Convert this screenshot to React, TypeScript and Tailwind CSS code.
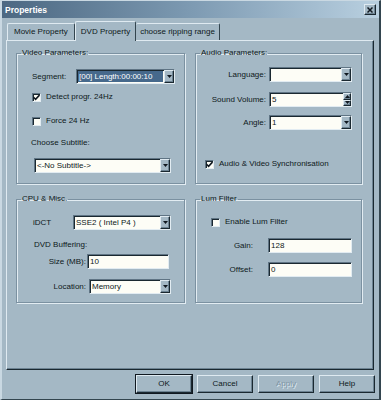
import type { ReactNode } from 'react';

const sunken =
  'bg-[#fdfdf6] border border-t-[#5f7484] border-l-[#5f7484] border-b-[#e2ecf2] border-r-[#e2ecf2] shadow-[inset_1px_1px_0_#1a2830]';
const raised =
  'bg-[#a4b8c5] border border-t-[#dfeaf1] border-l-[#dfeaf1] border-b-[#1a2830] border-r-[#1a2830] shadow-[inset_-1px_-1px_0_#6c8292]';

function Arrow({ up = false }: { up?: boolean }) {
  return (
    <svg width="5" height="3" viewBox="0 0 5 3" className={up ? 'rotate-180' : ''}>
      <path d="M0 0h5L2.5 3z" fill="#101820" />
    </svg>
  );
}

function Combo({ value, width, selected = false }: { value: string; width: string; selected?: boolean }) {
  return (
    <div className={`${sunken} ${width} h-[15px] flex items-stretch`}>
      <div className="flex-1 flex items-stretch p-[1px] overflow-hidden whitespace-nowrap">
        <span
          className={`flex-1 flex items-center px-[1px] ${selected ? 'bg-[#46698c] text-white' : ''}`}
        >
          {value}
        </span>
      </div>
      <div className={`${raised} w-[10px] flex items-center justify-center`}>
        <Arrow />
      </div>
    </div>
  );
}

function Field({ value, width, spin = false }: { value: string; width: string; spin?: boolean }) {
  return (
    <div className={`${sunken} ${width} h-[15px] flex items-stretch`}>
      <div className="flex-1 flex items-center px-[2px]">{value}</div>
      {spin && (
        <div className="w-[8px] flex flex-col">
          <div className={`${raised} flex-1 flex items-center justify-center`}>
            <Arrow up />
          </div>
          <div className={`${raised} flex-1 flex items-center justify-center`}>
            <Arrow />
          </div>
        </div>
      )}
    </div>
  );
}

function Check({ checked, label }: { checked: boolean; label: string }) {
  return (
    <div className="flex items-center gap-[5px] h-[10px]">
      <div className={`${sunken} w-[9px] h-[9px] flex items-center justify-center`}>
        {checked && (
          <svg width="7" height="7" viewBox="0 0 7 7">
            <path d="M0.5 3.2 L2.6 5.4 L6.5 1" stroke="#101820" strokeWidth="1.6" fill="none" />
          </svg>
        )}
      </div>
      <span>{label}</span>
    </div>
  );
}

function Group({ title, className, children }: { title: string; className: string; children: ReactNode }) {
  return (
    <fieldset
      className={`border border-[#7b91a1] shadow-[1px_1px_0_#e2ecf2,inset_1px_1px_0_#e2ecf2] ${className}`}
    >
      <legend className="ml-[4px] px-[1px] leading-[10px]">{title}</legend>
      {children}
    </fieldset>
  );
}

function Button({ label, isDefault = false, disabled = false }: { label: string; isDefault?: boolean; disabled?: boolean }) {
  return (
    <div
      className={`w-[56px] h-[18px] flex items-center justify-center ${raised} ${
        isDefault ? 'outline outline-1 outline-[#101820]' : ''
      } ${disabled ? 'text-[#7f95a4] [text-shadow:1px_1px_0_#dfeaf1]' : ''}`}
    >
      {label}
    </div>
  );
}

export default function App() {
  return (
    <div className="w-[381px] h-[400px] bg-[#a4b8c5] text-[#0e1820] text-[8px] leading-[10px] font-['Liberation_Sans',Arial,sans-serif] border-l-2 border-t border-l-[#c9d8e2] border-t-[#c9d8e2] border-r-2 border-r-[#33454f] border-b border-b-[#33454f] flex flex-col overflow-hidden">
      {/* title bar */}
      <div className="h-[17px] shrink-0 bg-gradient-to-r from-[#4c6882] via-[#7d9ab2] to-[#b9d0e0] flex items-center justify-between pl-[3px] pr-[3px]">
        <span className="text-white font-bold text-[8.5px]">Properties</span>
        <div className={`${raised} w-[12px] h-[11px] flex items-center justify-center`}>
          <svg width="6" height="6" viewBox="0 0 6 6">
            <path d="M0.5 0.5 L5.5 5.5 M5.5 0.5 L0.5 5.5" stroke="#101820" strokeWidth="1.5" />
          </svg>
        </div>
      </div>

      {/* tabs */}
      <div className="h-[22px] shrink-0 flex items-end pl-[5px] relative z-10">
        <div className="h-[17px] px-[6px] flex items-center border-t border-l border-[#dfeaf1] border-r border-r-[#33454f] rounded-t-[2px]">
          Movie Property
        </div>
        <div className="h-[20px] -mb-[1px] px-[5px] flex items-center bg-[#a4b8c5] border-t border-l border-[#dfeaf1] border-r border-r-[#33454f] rounded-t-[2px]">
          DVD Property
        </div>
        <div className="h-[17px] px-[4px] flex items-center border-t border-[#dfeaf1] border-r border-r-[#33454f] rounded-t-[2px]">
          choose ripping range
        </div>
      </div>

      {/* tab panel */}
      <div className="ml-[4px] w-[368px] h-[330px] shrink-0 border border-t-[#dfeaf1] border-l-[#dfeaf1] border-b-[#1a2830] border-r-[#1a2830] shadow-[inset_-1px_-1px_0_#6c8292] pl-[9px] pt-[7px]">
        <div className="grid grid-cols-[169px_167px] gap-x-[10px] gap-y-[10px]">
          <Group title="Video Parameters:" className="h-[136px]">
            <div className="pl-[15px]">
              <div className="mt-[11px] flex items-center h-[15px]">
                <span className="w-[44px]">Segment:</span>
                <Combo value="[00] Length:00:00:10" width="w-[99px]" selected />
              </div>
              <div className="mt-[8px]">
                <Check checked label="Detect progr. 24Hz" />
              </div>
              <div className="mt-[14px]">
                <Check checked={false} label="Force 24 Hz" />
              </div>
              <div className="mt-[12px] -ml-[1px]">Choose Subtitle:</div>
              <div className="mt-[10px] ml-[2px]">
                <Combo value="<-No Subtitle->" width="w-[137px]" />
              </div>
            </div>
          </Group>

          <Group title="Audio Parameters:" className="h-[136px]">
            <div className="mt-[9px] flex items-center h-[15px]">
              <span className="w-[73px] text-right pr-[3px]">Language:</span>
              <Combo value="" width="w-[83px]" />
            </div>
            <div className="mt-[10px] flex items-center h-[15px]">
              <span className="w-[73px] text-right pr-[3px]">Sound Volume:</span>
              <Field value="5" width="w-[83px]" spin />
            </div>
            <div className="mt-[8px] flex items-center h-[15px]">
              <span className="w-[73px] text-right pr-[3px]">Angle:</span>
              <Combo value="1" width="w-[83px]" />
            </div>
            <div className="mt-[29px] pl-[9px]">
              <Check checked label="Audio & Video Synchronisation" />
            </div>
          </Group>

          <Group title="CPU & Misc." className="h-[109px]">
            <div className="pl-[16px]">
              <div className="mt-[11px] flex items-center h-[15px]">
                <span className="w-[40px]">iDCT</span>
                <Combo value="SSE2 ( Intel P4 )" width="w-[98px]" />
              </div>
              <div className="mt-[10px] ml-[1px]">DVD Buffering:</div>
              <div className="mt-[4px] flex items-center h-[15px]">
                <span className="w-[54px] text-right pr-[1px]">Size (MB):</span>
                <Field value="10" width="w-[82px]" />
              </div>
              <div className="mt-[10px] flex items-center h-[15px]">
                <span className="w-[56px] text-right pr-[3px]">Location:</span>
                <Combo value="Memory" width="w-[82px]" />
              </div>
            </div>
          </Group>

          <Group title="Lum Filter" className="h-[109px]">
            <div className="mt-[13px] pl-[15px]">
              <Check checked={false} label="Enable Lum Filter" />
            </div>
            <div className="mt-[11px] flex items-center h-[15px]">
              <span className="w-[57px] text-right">Gain:</span>
              <span className="w-[15px]" />
              <Field value="128" width="w-[84px]" />
            </div>
            <div className="mt-[9px] flex items-center h-[15px]">
              <span className="w-[57px] text-right">Offset:</span>
              <span className="w-[15px]" />
              <Field value="0" width="w-[84px]" />
            </div>
          </Group>
        </div>
      </div>

      {/* buttons */}
      <div className="mt-[5px] flex justify-end gap-[5px] pr-[4px]">
        <Button label="OK" isDefault />
        <Button label="Cancel" />
        <Button label="Apply" disabled />
        <Button label="Help" />
      </div>
    </div>
  );
}
